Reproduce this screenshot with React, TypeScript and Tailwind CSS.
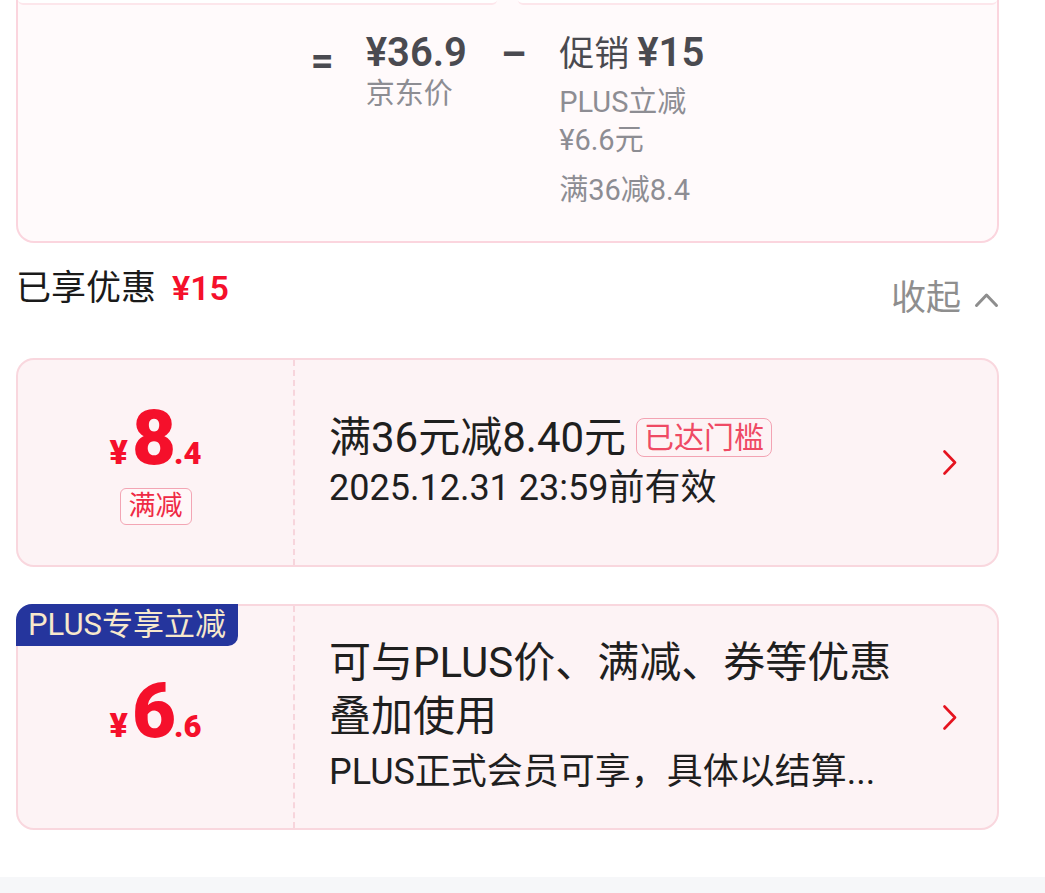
import React from 'react'

const font = "font-[family-name:Roboto,'Noto_Sans_CJK_SC',sans-serif]"

function ChevronRight() {
  return (
    <svg width="16" height="25" viewBox="0 0 16 25" fill="none">
      <path d="M2.5 1.5L13 12.5L2.5 23.5" stroke="#e5131f" strokeWidth="2.6" strokeLinecap="round" strokeLinejoin="round" />
    </svg>
  )
}

function ChevronUp() {
  return (
    <svg width="25" height="16" viewBox="0 0 25 16" fill="none">
      <path d="M2.5 13.5L12.5 3L22.5 13.5" stroke="#8e8e8e" strokeWidth="3" strokeLinecap="round" strokeLinejoin="round" />
    </svg>
  )
}

function Amount({ int, dec }: { int: string; dec: string }) {
  return (
    <div className="flex items-baseline font-black leading-none text-[#f5102b]">
      <span className="mr-[4px] text-[34px]">¥</span>
      <span className="text-[76px] tracking-[-2px]">{int}</span>
      <span className="text-[31px]">.{dec}</span>
    </div>
  )
}

export default function App() {
  return (
    <div className={`min-h-screen bg-white ${font}`}>
      <div className="pl-[16px] pr-[46px]">
        {/* price breakdown card (top cut off) */}
        <div className="rounded-b-[18px] border-2 border-t-0 border-[#fbd5de] bg-[#fffafb] pb-[32px]">
          <div className="flex h-[5px] gap-[21px]">
            <div className="flex-1 rounded-b-[10px] border-b-2 border-[#fde6eb] bg-white" />
            <div className="flex-1 rounded-b-[10px] border-b-2 border-[#fde6eb] bg-white" />
          </div>
          <div className="flex items-start justify-center pt-[26px]">
            <div className="mt-[8px] text-[40px] font-bold leading-[44px] text-[#4a4a50]">=</div>
            <div className="ml-[32px] flex flex-col">
              <div className="text-[40px] font-semibold leading-[44px] text-[#4a4a50]">¥36.9</div>
              <div className="text-[29px] leading-[38px] text-[#8d8d93]">京东价</div>
            </div>
            <div className="ml-[34px] mt-[2px] text-[40px] font-bold leading-[44px] text-[#4a4a50]">–</div>
            <div className="ml-[33px] flex flex-col text-[#8d8d93]">
              <div className="flex items-baseline leading-[44px] text-[#4a4a50]">
                <span className="text-[35px]">促销</span>
                <span className="ml-[8px] text-[40px] font-semibold">¥15</span>
              </div>
              <div className="mt-[6px] text-[29px] leading-[38px]">PLUS立减</div>
              <div className="text-[29px] leading-[38px]">¥6.6元</div>
              <div className="mt-[12px] text-[29px] leading-[38px]">满36减8.4</div>
            </div>
          </div>
        </div>

        {/* header */}
        <div className="flex items-start justify-between pt-[25px] pb-[39px]">
          <div className="flex items-baseline leading-[40px]">
            <span className="text-[35px] text-[#1a1a1a]">已享优惠</span>
            <span className="ml-[16px] text-[34px] font-semibold text-[#f5102b]">¥15</span>
          </div>
          <div className="mt-[11px] flex items-center leading-[40px] text-[#8e8e8e]">
            <span className="text-[35px]">收起</span>
            <span className="ml-[13px] mt-[2px]">
              <ChevronUp />
            </span>
          </div>
        </div>

        {/* coupon 1 */}
        <div className="flex h-[209px] rounded-[18px] border-2 border-[#f9d7de] bg-[#fdf3f5]">
          <div className="flex w-[275px] flex-col items-center justify-center">
            <Amount int="8" dec="4" />
            <div className="mt-[12px] rounded-[6px] border border-[#f3a5b4] bg-[#fff7f8] px-[8px] text-[27px] leading-[35px] text-[#ef2a45]">
              满减
            </div>
          </div>
          <div className="border-l-2 border-dashed border-[#f7d5dc]" />
          <div className="flex flex-1 items-center pl-[34px] pr-[39px]">
            <div className="flex flex-1 flex-col">
              <div className="flex items-center leading-[50px]">
                <span className="text-[42px] text-[#1f1f1f]">满36元减8.40元</span>
                <span className="ml-[10px] rounded-[8px] border-[1.5px] border-[#f3a3b3] px-[7px] text-[30px] leading-[37px] text-[#ef4a64]">
                  已达门槛
                </span>
              </div>
              <div className="text-[36px] leading-[50px] text-[#1f1f1f]">2025.12.31 23:59前有效</div>
            </div>
            <ChevronRight />
          </div>
        </div>

        {/* coupon 2 */}
        <div className="relative mt-[37px] flex h-[226px] rounded-[18px] border-2 border-[#f9d7de] bg-[#fdf3f5]">
          <div className="absolute -left-[2px] -top-[2px] rounded-tl-[16px] rounded-br-[10px] bg-[#25359d] px-[12px] text-[31px] leading-[42px] text-[#f7e8cc]">
            PLUS专享立减
          </div>
          <div className="flex w-[275px] items-center justify-center pb-[12px]">
            <Amount int="6" dec="6" />
          </div>
          <div className="border-l-2 border-dashed border-[#f7d5dc]" />
          <div className="flex flex-1 items-center pl-[34px] pr-[39px]">
            <div className="flex flex-1 flex-col text-[#1f1f1f]">
              <div className="max-w-[575px] text-[42px] leading-[54px]">可与PLUS价、满减、券等优惠叠加使用</div>
              <div className="mt-[2px] text-[36px] leading-[52px]">PLUS正式会员可享，具体以结算...</div>
            </div>
            <ChevronRight />
          </div>
        </div>
      </div>
      <div className="mt-[47px] h-[40px] bg-[#f6f7f9]" />
    </div>
  )
}
